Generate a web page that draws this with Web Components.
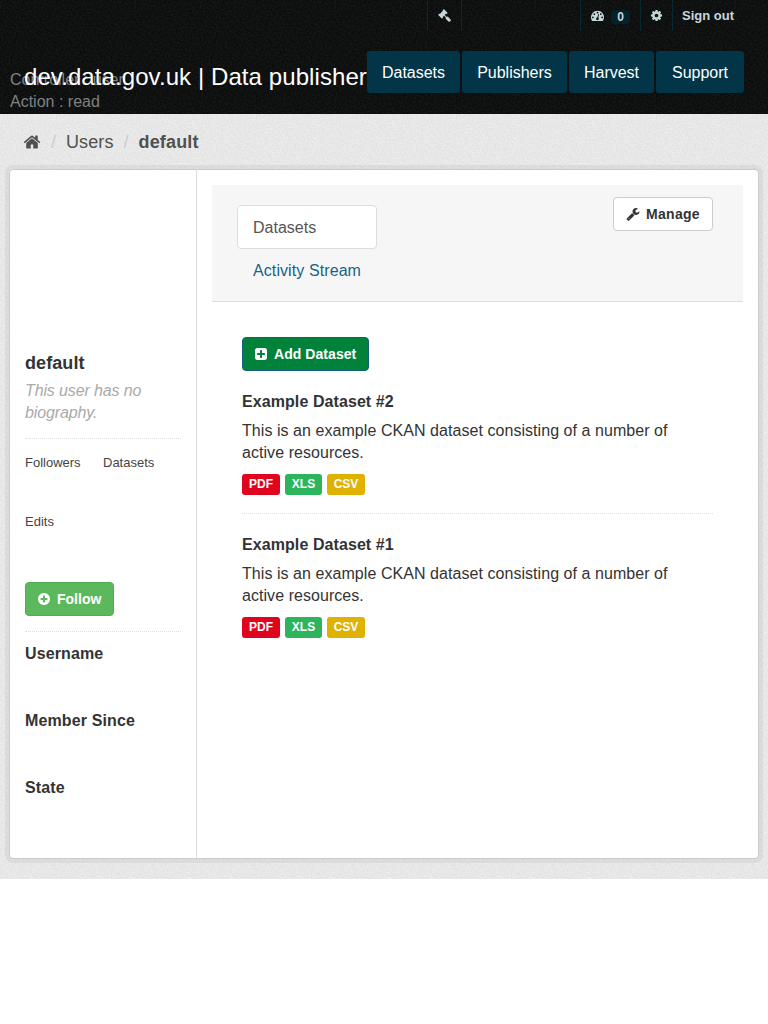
<!DOCTYPE html>
<html lang="en">
<head>
<meta charset="utf-8">
<title>default - Users - dev.data.gov.uk | Data publisher</title>
<style>
body{margin:0;background:#fff;font:16px/22px "Liberation Sans",Arial,sans-serif;color:#333}
</style>
</head>
<body>
<user-page></user-page>
<script>
const ICONS={
home:'M1472 992v480q0 26-19 45t-45 19h-384v-384h-256v384h-384q-26 0-45-19t-19-45v-480q0-1 .5-3t.5-3l575-474 575 474q1 2 1 6zm223-69l-62 74q-8 9-21 11h-3q-13 0-21-7l-692-577-692 577q-12 8-24 7-13-2-21-11l-62-74q-8-10-7-23.5t11-21.5l719-599q32-26 76-26t76 26l244 204v-195q0-14 9-23t23-9h192q14 0 23 9t9 23v408l219 182q10 8 11 21.5t-7 23.5z',
cog:'M1152 896q0-106-75-181t-181-75-181 75-75 181 75 181 181 75 181-75 75-181zm512-109v222q0 12-8 23t-20 13l-185 28q-19 54-39 91 35 50 107 138 10 12 10 25t-9 23q-27 37-99 108t-94 71q-12 0-26-9l-138-108q-44 23-91 38-16 136-29 186-7 28-36 28h-222q-14 0-24.5-8.5t-11.5-21.5l-28-184q-49-16-90-37l-141 107q-10 9-25 9-14 0-25-11-126-114-165-168-7-10-7-23 0-12 8-23 15-21 51-66.5t54-70.5q-27-50-41-99l-183-27q-13-2-21-12.5t-8-23.5v-222q0-12 8-23t19-13l186-28q14-46 39-92-40-57-107-138-10-12-10-24 0-10 9-23 26-36 98.5-107.5t94.5-71.5q13 0 26 10l138 107q44-23 91-38 16-136 29-186 7-28 36-28h222q14 0 24.5 8.5t11.5 21.5l28 184q49 16 90 37l142-107q9-9 24-9 13 0 25 10 129 119 165 170 7 8 7 22 0 12-8 23-15 21-51 66.5t-54 70.5q26 50 41 98l183 28q13 2 21 12.5t8 23.5z',
'plus-circle':'M1344 960v-128q0-26-19-45t-45-19h-256v-256q0-26-19-45t-45-19h-128q-26 0-45 19t-19 45v256h-256q-26 0-45 19t-19 45v128q0 26 19 45t45 19h256v256q0 26 19 45t45 19h128q26 0 45-19t19-45v-256h256q26 0 45-19t19-45zm320-64q0 209-103 385.5t-279.5 279.5-385.5 103-385.5-103-279.5-279.5-103-385.5 103-385.5 279.5-279.5 385.5-103 385.5 103 279.5 279.5 103 385.5z',
'plus-square':'M1408 960v-128q0-26-19-45t-45-19h-320v-320q0-26-19-45t-45-19h-128q-26 0-45 19t-19 45v320h-320q-26 0-45 19t-19 45v128q0 26 19 45t45 19h320v320q0 26 19 45t45 19h128q26 0 45-19t19-45v-320h320q26 0 45-19t19-45zm256-544v960q0 119-84.5 203.5t-203.5 84.5h-960q-119 0-203.5-84.5t-84.5-203.5v-960q0-119 84.5-203.5t203.5-84.5h960q119 0 203.5 84.5t84.5 203.5z',
wrench:'M448 1472q0-26-19-45t-45-19-45 19-19 45 19 45 45 19 45-19 19-45zm644-420l-682 682q-37 37-90 37-52 0-91-37l-106-108q-38-36-38-90 0-53 38-91l681-681q39 98 114.5 173.5t173.5 114.5zm634-435q0 39-23 106-47 134-164.5 217.5t-258.5 83.5q-185 0-316.5-131.5t-131.5-316.5 131.5-316.5 316.5-131.5q58 0 121.5 16.5t107.5 46.5q16 11 16 28t-16 28l-293 169v224l193 107q5-3 79-48.5t135.5-81 70.5-35.5q15 0 23.5 10t8.5 25z',
gavel:'M1771 1536q0 53-37 90l-107 108q-39 37-91 37-53 0-90-37l-363-364q-38-36-38-90 0-53 43-96l-256-256-126 126q-14 14-34 14t-34-14q2 2 12.5 12t12.5 13 10 11.5 10 13.5 6 13.5 5.5 16.5 1.5 18q0 38-28 68-3 3-16.5 18t-19 20.5-18.5 16.5-22 15.5-22 9-26 4.5q-40 0-68-28l-408-408q-28-28-28-68 0-13 4.5-26t9-22 15.5-22 16.5-18.5 20.5-19 18-16.5q30-28 68-28 10 0 18 1.5t16.5 5.5 13.5 6 13.5 10 11.5 10 13 12.5 12 12.5q-14-14-14-34t14-34l348-348q14-14 34-14t34 14q-2-2-12.5-12t-12.5-13-10-11.5-10-13.5-6-13.5-5.5-16.5-1.5-18q0-38 28-68 3-3 16.5-18t19-20.5 18.5-16.5 22-15.5 22-9 26-4.5q40 0 68 28l408 408q28 28 28 68 0 13-4.5 26t-9 22-15.5 22-16.5 18.5-20.5 19-18 16.5q-30 28-68 28-10 0-18-1.5t-16.5-5.5-13.5-6-13.5-10-11.5-10-13-12.5-12-12.5q14 14 14 34t-14 34l-126 126 256 256q43-43 96-43 52 0 91 37l363 363q37 39 37 91z',
gauge:'M384 1152q0-53-37.5-90.5t-90.5-37.5-90.5 37.5-37.5 90.5 37.5 90.5 90.5 37.5 90.5-37.5 37.5-90.5zm192-448q0-53-37.5-90.5t-90.5-37.5-90.5 37.5-37.5 90.5 37.5 90.5 90.5 37.5 90.5-37.5 37.5-90.5zm428 481l101-382q6-26-7.5-48.5t-38.5-29.5-48 6.5-30 39.5l-101 382q-60 5-107 43.5t-63 98.5q-20 77 20 146t117 89 146-20 89-117q16-60-6-117t-72-91zm660-33q0-53-37.5-90.5t-90.5-37.5-90.5 37.5-37.5 90.5 37.5 90.5 90.5 37.5 90.5-37.5 37.5-90.5zm-640-640q0-53-37.5-90.5t-90.5-37.5-90.5 37.5-37.5 90.5 37.5 90.5 90.5 37.5 90.5-37.5 37.5-90.5zm448 192q0-53-37.5-90.5t-90.5-37.5-90.5 37.5-37.5 90.5 37.5 90.5 90.5 37.5 90.5-37.5 37.5-90.5zm320 448q0 261-141 483-19 29-54 29h-1402q-35 0-54-29-141-221-141-483 0-182 71-348t191-286 286-191 348-71 348 71 286 191 191 286 71 348z'
};
// Subtle paper grain shared by the masthead and the page background.
const grain=(rgb,slope,off)=>`url("data:image/svg+xml,${encodeURIComponent(`<svg xmlns="http://www.w3.org/2000/svg" width="100" height="100"><filter id="n" x="0" y="0" width="100%" height="100%"><feTurbulence type="fractalNoise" baseFrequency=".55" numOctaves="2" stitchTiles="stitch"/><feColorMatrix values="0 0 0 0 ${rgb} 0 0 0 0 ${rgb} 0 0 0 0 ${rgb} ${slope} 0 0 0 ${off}"/></filter><rect width="100" height="100" filter="url(#n)"/></svg>`)}")`;

const define=(name,html)=>customElements.define(name,class extends HTMLElement{
  constructor(){
    super();
    const t=document.createElement('template');
    t.innerHTML=html;
    this.attachShadow({mode:'open'}).append(t.content.cloneNode(true));
  }
});

customElements.define('fa-icon',class extends HTMLElement{
  connectedCallback(){
    if(this.shadowRoot)return;
    this.attachShadow({mode:'open'}).innerHTML=`<style>:host{display:block;flex:none;width:14px;height:14px}svg{display:block;width:100%;height:100%;fill:currentColor;overflow:visible}</style><svg viewBox="0 0 1792 1792" aria-hidden="true"><path d="${ICONS[this.getAttribute('name')]}"/></svg>`;
  }
});

define('account-bar',`<style>
:host{display:flex;height:31px;justify-content:flex-end;color:#c6d7db;font-size:13px;font-weight:bold;line-height:31px;padding-right:24px}
a{box-sizing:border-box;display:flex;align-items:center;border-left:1px solid #07282f;padding:0 10px 0 9px;color:#c6d7db}
.admin{border-right:1px solid #07282f;width:35px;margin-right:118px;padding-left:10px}
.dash{width:60px;padding-left:10px}.gear{width:32px;padding-left:8.5px}.out{padding-right:10px}
b{background:#04222b;border-radius:4px;line-height:14px;height:14px;width:19px;margin-left:7px;text-align:center;font-size:12px;margin-top:3px}
fa-icon{width:13px;height:13px}
</style><a class="admin"><fa-icon name="gavel"></fa-icon></a><a class="dash"><fa-icon name="gauge"></fa-icon><b>0</b></a><a class="gear"><fa-icon name="cog"></fa-icon></a><a class="out">Sign out</a>`);

define('nav-pill',`<style>:host{box-sizing:border-box;display:block;height:42px;padding:11px 0 9px;background:#013547;color:#fff;border-radius:3px;text-align:center;width:var(--w);white-space:nowrap}</style><slot></slot>`);

define('site-header',`<style>
:host{display:block;position:relative;height:114px;background:${grain(1,.1,-.025)} #090b0b;color:#fff}
.row{display:flex;padding:20px 24px 0;align-items:flex-start;position:relative}
h1{margin:11px 0 0;font-size:24px;line-height:30px;font-weight:normal;white-space:nowrap;width:343px;letter-spacing:.085px}
nav{display:flex;gap:2px}
.debug{position:absolute;left:10px;top:69px;color:#808181}
</style><div class="debug">Controller : user<br>Action : read</div><account-bar></account-bar><div class="row"><h1>dev.data.gov.uk | Data publisher</h1><nav><nav-pill style="--w:93px">Datasets</nav-pill><nav-pill style="--w:105px">Publishers</nav-pill><nav-pill style="--w:85px">Harvest</nav-pill><nav-pill style="--w:88px">Support</nav-pill></nav></div>`);

define('bread-crumb',`<style>:host{display:flex;align-items:center;height:22px;padding:17px 24px 16px 23px;font-size:18px;color:#505050}
fa-icon{width:18px;height:18px;margin-top:-1px}i{font-style:normal;color:#ccc;margin:0 10px}i+span{letter-spacing:.1px}b{letter-spacing:.15px}</style><fa-icon name="home"></fa-icon><i>/</i><span>Users</span><i>/</i><b>default</b>`);

define('action-button',`<style>:host{box-sizing:border-box;display:inline-flex;align-items:center;height:34px;padding:0 11px;border:1px solid var(--edge);border-radius:4px;background:var(--bg);color:var(--ink,#fff);font-size:14px;font-weight:bold;line-height:20px;white-space:nowrap;width:var(--w);letter-spacing:var(--ls,0);vertical-align:top}
slot[name=icon]{display:flex;margin-right:6px}</style><slot name="icon"></slot><slot></slot>`);

define('user-profile',`<style>
:host{box-sizing:border-box;display:block;width:187px;padding:183px 15px 0;border-right:1px solid #ddd}
h1{font-size:18px;line-height:20px;margin:0 0 7px;letter-spacing:.08px}
p{margin:0;color:#aaa;font-style:italic;padding-bottom:14px;border-bottom:1px dotted #ddd;letter-spacing:-.12px}
.nums{display:grid;grid-template-columns:78px 1fr;font-size:13px;line-height:20px;row-gap:39px;margin-top:14px;color:#444}
action-button{margin-top:50px}
dl{margin:15px 0 0;border-top:1px dotted #ddd;padding-top:11px}
dt{font-weight:bold;height:67px;letter-spacing:.12px}
</style><h1>default</h1><p>This user has no biography.</p>
<div class="nums"><span>Followers</span><span>Datasets</span><span>Edits</span></div>
<action-button style="--bg:#5cb85c;--edge:#4cae4c;--w:89px"><fa-icon slot="icon" name="plus-circle"></fa-icon>Follow</action-button>
<dl><dt>Username</dt><dt>Member Since</dt><dt>State</dt></dl>`);

define('page-header',`<style>
:host{box-sizing:border-box;display:flex;justify-content:space-between;align-items:flex-start;height:117px;background:#f6f6f6;border-bottom:1px solid #ddd;border-radius:0 3px 0 0;padding:12px 30px 0 25px}
.tabs{width:140px;margin-top:8px}
a{box-sizing:border-box;display:block;height:44px;border:1px solid transparent;border-radius:4px;padding:11px 15px 9px;color:#186384;white-space:nowrap;line-height:22px}
.on{background:#fff;border-color:#ddd;color:#555}a+a{margin-top:-1px;letter-spacing:.09px}
</style><div class="tabs"><a class="on">Datasets</a><a>Activity Stream</a></div><action-button style="--bg:#fff;--edge:#ccc;--ink:#333;--w:100px;--ls:.3px"><fa-icon slot="icon" name="wrench" style="margin-left:1px"></fa-icon>Manage</action-button>`);

define('format-label',`<style>:host{box-sizing:border-box;display:block;height:21px;width:38px;border-radius:3px;background:var(--bg);color:#fff;font-size:12px;font-weight:bold;line-height:20px;text-align:center}</style><slot></slot>`);

define('dataset-item',`<style>
:host{display:block;padding-bottom:18px;border-bottom:var(--rule,1px dotted #ddd)}
h3{margin:0 0 7px;font-size:16px;line-height:22px;letter-spacing:.08px}
p{margin:0 0 10px;max-width:450px;letter-spacing:.055px}
div{display:flex;gap:5px}
</style><h3><slot></slot></h3><p>This is an example CKAN dataset consisting of a number of active resources.</p>
<div><format-label style="--bg:#e0051e">PDF</format-label><format-label style="--bg:#2db55d;width:37px">XLS</format-label><format-label style="--bg:#dfb100">CSV</format-label></div>`);

define('user-page',`<style>
:host{display:block}
.main{height:765px;background:${grain(1,.8,-.25)} #e3e3e3;overflow:hidden}
.wrap{box-sizing:border-box;display:flex;height:690px;margin:0 9px;border:1px solid #ccc;border-radius:4px;background:#fff;box-shadow:0 0 0 4px rgba(0,0,0,.05)}
.primary{flex:1;padding:15px 15px 0}
.body{padding:35px 30px 0}
dataset-item{margin-top:20px}
</style><site-header></site-header><div class="main"><bread-crumb></bread-crumb><div class="wrap"><user-profile></user-profile><div class="primary"><page-header></page-header><div class="body"><action-button style="--bg:#00823b;--edge:#165c7d;--w:127px;--ls:.06px"><fa-icon slot="icon" name="plus-square"></fa-icon>Add Dataset</action-button><dataset-item>Example Dataset #2</dataset-item><dataset-item style="--rule:0">Example Dataset #1</dataset-item></div></div></div></div>`);
</script>
</body>
</html>
